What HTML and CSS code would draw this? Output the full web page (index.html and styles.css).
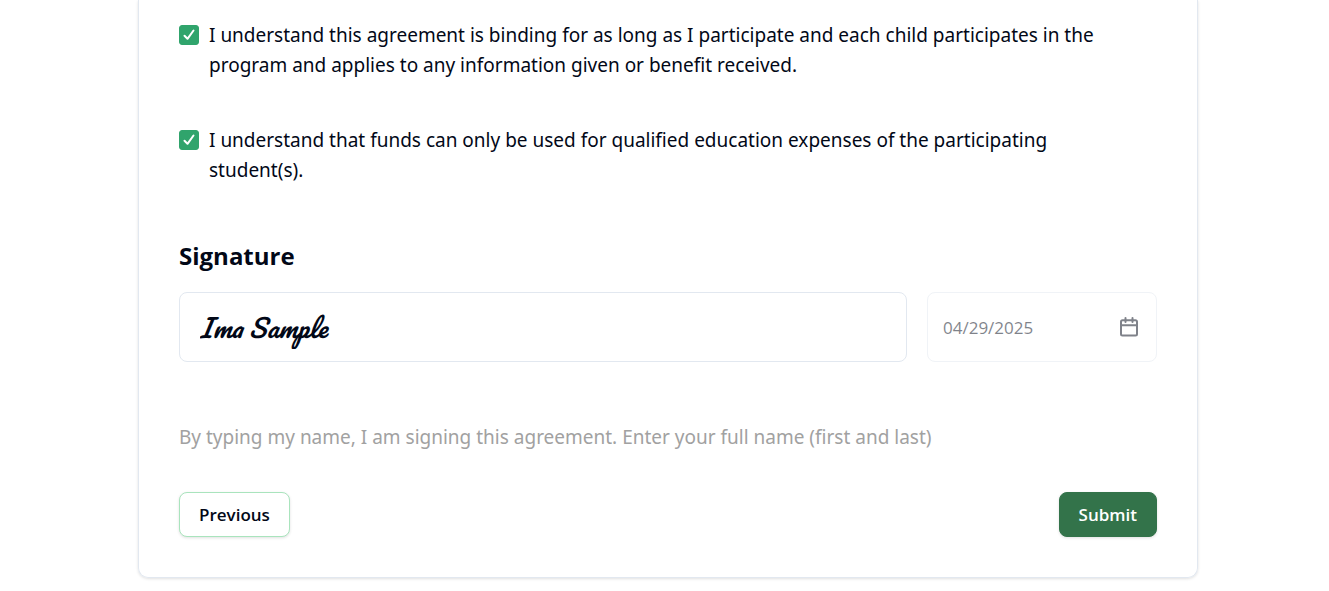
FILE: index.html
```html
<!DOCTYPE html>
<html lang="en">
<head>
<meta charset="utf-8">
<meta name="viewport" content="width=device-width, initial-scale=1">
<title>Agreement</title>
<link rel="stylesheet" href="styles.css">
</head>
<body>
<main class="page">
  <form class="card">
    <div class="terms">
      <div class="term">
        <input class="term-check" type="checkbox" id="binding" checked>
        <label class="term-text" for="binding">I understand this agreement is binding for as long as I participate and each child participates in the program and applies to any information given or benefit received.</label>
      </div>
      <div class="term">
        <input class="term-check" type="checkbox" id="funds" checked>
        <label class="term-text" for="funds">I understand that funds can only be used for qualified education expenses of the participating student(s).</label>
      </div>
    </div>

    <h2 class="heading"><label for="signature">Signature</label></h2>
    <div class="sign-row">
      <input class="field signature" type="text" id="signature" value="Ima Sample" aria-describedby="hint">
      <div class="field date">
        <input class="date-input" type="text" value="04/29/2025" aria-label="Date" disabled>
        <svg class="date-icon" viewBox="0 0 20 20" aria-hidden="true"><path d="M3.500 3.200h13a1.500 1.500 0 0 1 1.500 1.500v12.300a1.500 1.500 0 0 1-1.500 1.500h-13A1.500 1.500 0 0 1 2 17V4.700a1.500 1.500 0 0 1 1.500-1.500ZM2 8.300h16M6.500 1v4M13.500 1v4"/></svg>
      </div>
    </div>
    <p class="hint" id="hint">By typing my name, I am signing this agreement. Enter your full name (first and last)</p>
    <div class="actions">
      <button class="btn btn-outline" type="button">Previous</button>
      <button class="btn btn-solid" type="submit">Submit</button>
    </div>
  </form>
</main>
</body>
</html>
```
FILE: styles.css
```css
* { box-sizing: border-box; }

body {
  margin: 0;
  background: #fff;
  color: #020817;
  font-family: "Noto Sans", "Open Sans", sans-serif;
  font-size: 19px;
  line-height: 30px;
}

.page { padding: 0 0 12px 7px; }

.card {
  max-width: 1060px;
  margin: 0 auto;
  padding: 20px 40px 40px;
  border: 1px solid #e2e8f0;
  border-top: 0;
  border-radius: 0 0 10px 10px;
  box-shadow: 0 1px 3px rgba(0, 0, 0, 0.12);
}

.terms { display: grid; gap: 45px; }

.term {
  display: flex;
  align-items: flex-start;
  gap: 10px;
}

.term-text { max-width: 910px; }

.term-check {
  appearance: none;
  flex: none;
  width: 20px;
  height: 20px;
  margin: 5px 0;
  border: 1px solid #30a46c;
  border-radius: 3px;
}

.term-check:checked {
  background: #30a46c url("data:image/svg+xml,%3Csvg xmlns='http://www.w3.org/2000/svg' viewBox='0 0 18 18'%3E%3Cpath d='M4.500 9.700 7.500 12.800 13.500 4.500' fill='none' stroke='white' stroke-width='2' stroke-linecap='round' stroke-linejoin='round'/%3E%3C/svg%3E") center / 18px no-repeat;
}

.heading {
  margin: 53px 0 19px;
  font-family: "Open Sans", "Noto Sans", sans-serif;
  font-size: 24px;
  font-weight: 700;
  line-height: 35px;
}

.sign-row {
  display: grid;
  grid-template-columns: minmax(0, 1fr) 230px;
  gap: 20px;
}

.field {
  width: 100%;
  height: 70px;
  border: 1px solid #e2e8f0;
  border-radius: 8px;
  background: #fff;
}

.signature {
  padding: 0 20px;
  color: #020817;
  font-family: "Pacifico", "Lato", cursive;
  font-size: 25px;
  font-style: italic;
}

.date {
  display: flex;
  align-items: center;
  justify-content: space-between;
  padding: 0 17px 0 15px;
  opacity: 0.5;
}

.date-input {
  width: 140px;
  padding: 0;
  border: 0;
  background: transparent;
  color: #020817;
  font-family: "Open Sans", "Noto Sans", sans-serif;
  font-size: 17px;
}

.date-icon {
  width: 20px;
  height: 20px;
  fill: none;
  stroke: #020817;
  stroke-width: 2;
  stroke-linecap: round;
  stroke-linejoin: round;
}

.hint {
  margin: 60px 0 40px;
  color: #a1a1a1;
}

.actions {
  display: flex;
  justify-content: space-between;
}

.btn {
  height: 45px;
  padding: 0 19px;
  border: 1px solid transparent;
  border-radius: 8px;
  font-family: "Open Sans", "Noto Sans", sans-serif;
  font-size: 17px;
  font-weight: 600;
  box-shadow: 0 1px 3px rgba(0, 0, 0, 0.12);
}

.btn-outline {
  border-color: #a9e4bd;
  background: #fff;
  color: #020817;
}

.btn-solid {
  border-color: #33734a;
  background: #33734a;
  color: #fff;
}
```
